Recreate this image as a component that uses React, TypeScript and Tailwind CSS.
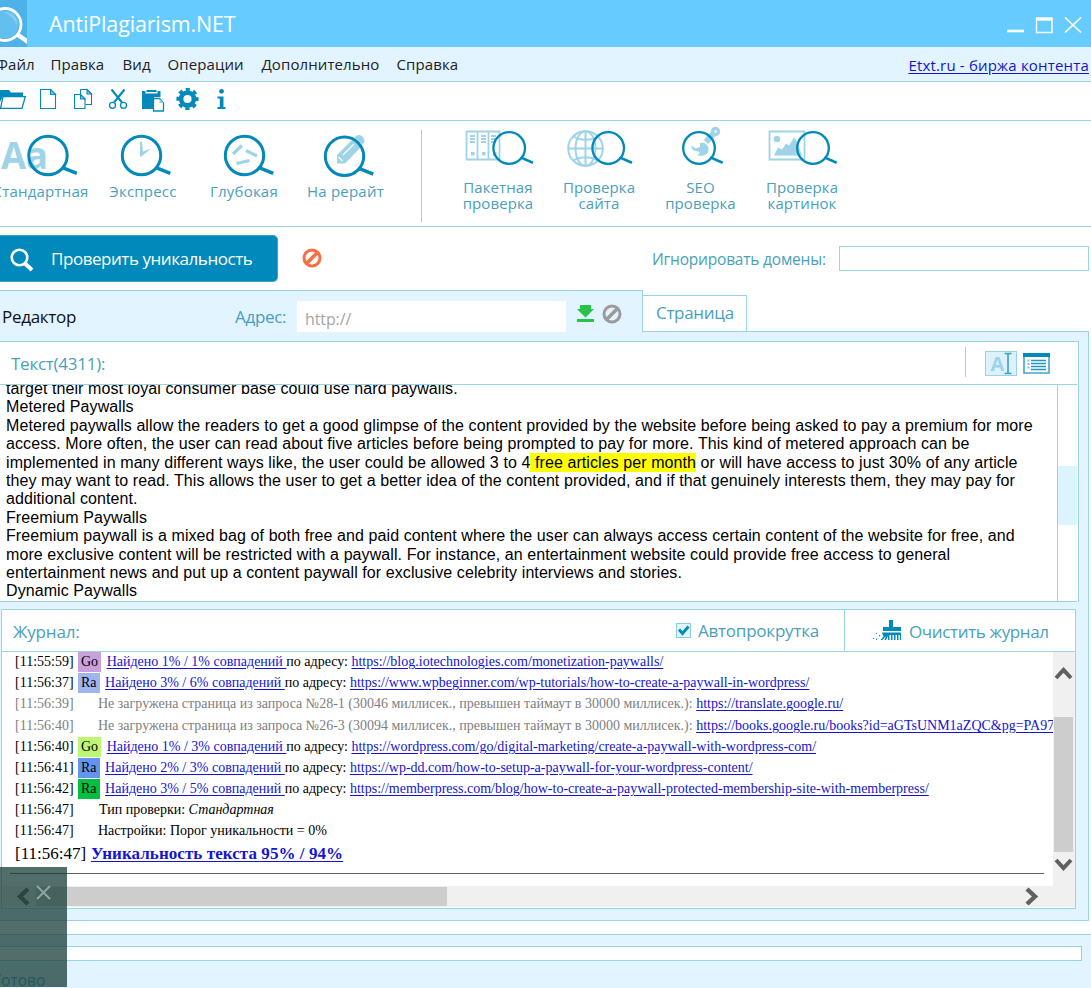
import { ReactNode } from "react";

type LogEntry = {
  time: string;
  engine: string;
  badge: string;
  found: string;
  url: string;
};

const menuItems = [
  { label: "Файл", className: "w-[54.5px] -ml-[4px]" },
  { label: "Правка", className: "w-[72px]" },
  { label: "Вид", className: "w-[45px]" },
  { label: "Операции", className: "w-[94px]" },
  { label: "Дополнительно", className: "w-[135px]" },
  { label: "Справка", className: "w-[70px]" }
];

const articleLines: ReactNode[] = [
  "target their most loyal consumer base could use hard paywalls.",
  "Metered Paywalls",
  "Metered paywalls allow the readers to get a good glimpse of the content provided by the website before being asked to pay a premium for more",
  "access. More often, the user can read about five articles before being prompted to pay for more. This kind of metered approach can be",
  <>
    implemented in many different ways like, the user could be allowed 3 to 4
    <span className="bg-[#ffff00] py-px"> free articles per month</span> or will have access to just 30% of any article
  </>,
  "they may want to read. This allows the user to get a better idea of the content provided, and if that genuinely interests them, they may pay for",
  "additional content.",
  "Freemium Paywalls",
  "Freemium paywall is a mixed bag of both free and paid content where the user can always access certain content of the website for free, and",
  "more exclusive content will be restricted with a paywall. For instance, an entertainment website could provide free access to general",
  "entertainment news and put up a content paywall for exclusive celebrity interviews and stories.",
  "Dynamic Paywalls"
];

const firstEntries: LogEntry[] = [
  { time: "[11:55:59]", engine: "Go", badge: "bg-[#c9a0dc]", found: "Найдено 1% / 1% совпадений ", url: "https://blog.iotechnologies.com/monetization-paywalls/" },
  { time: "[11:56:37]", engine: "Ra", badge: "bg-[#a0b4f0]", found: "Найдено 3% / 6% совпадений ", url: "https://www.wpbeginner.com/wp-tutorials/how-to-create-a-paywall-in-wordpress/" }
];

const lastEntries: LogEntry[] = [
  { time: "[11:56:40]", engine: "Go", badge: "bg-[#bef574]", found: "Найдено 1% / 3% совпадений ", url: "https://wordpress.com/go/digital-marketing/create-a-paywall-with-wordpress-com/" },
  { time: "[11:56:41]", engine: "Ra", badge: "bg-[#6495ed]", found: "Найдено 2% / 3% совпадений ", url: "https://wp-dd.com/how-to-setup-a-paywall-for-your-wordpress-content/" },
  { time: "[11:56:42]", engine: "Ra", badge: "bg-[#00c040]", found: "Найдено 3% / 5% совпадений ", url: "https://memberpress.com/blog/how-to-create-a-paywall-protected-membership-site-with-memberpress/" }
];

function FoundRow({ entry }: { entry: LogEntry }) {
  return (
    <div className="flex h-[21px] items-start">
      <span className="w-[63px] shrink-0 leading-5">{entry.time}</span>
      <span className={`h-5 shrink-0 px-[3px] leading-5 ${entry.badge}`}>{entry.engine}</span>
      <span className="ml-[5.5px] whitespace-pre leading-5">
        <a className="text-[#1414d2] underline underline-offset-2">{entry.found}</a>
        по адресу: <a className="text-[#1414d2] underline underline-offset-2">{entry.url}</a>
      </span>
    </div>
  );
}

function FailedRow({ time, text, url, className }: { time: string; text: string; url: string; className: string }) {
  return (
    <div className={`flex text-[#808080] ${className}`}>
      <span className="w-[83px] shrink-0 leading-5">{time}</span>
      <span className="whitespace-pre leading-5">
        {text} <a className="text-[#1414d2] underline underline-offset-2">{url}</a>
      </span>
    </div>
  );
}

function Lens({ cx, cy, r, w }: { cx: number; cy: number; r: number; w: number }) {
  const d = r * 0.72;
  return (
    <g stroke="#0089ba" fill="none">
      <circle cx={cx} cy={cy} r={r} strokeWidth={w} />
      <path d={`M${cx + d} ${cy + d - 2}L${cx + r * 1.5} ${cy + r * 0.93}`} strokeWidth={w + 0.4} />
    </g>
  );
}

function Forbidden({ color, className }: { color: string; className: string }) {
  return (
    <svg className={className} viewBox="0 0 20 20" fill="none" stroke={color} strokeWidth="3">
      <circle cx="10" cy="10" r="8" />
      <path d="M5 15L15 5" strokeWidth="3.6" />
    </svg>
  );
}

function ModeButton({ label, className, children }: { label: string; className: string; children: ReactNode }) {
  return (
    <div className={`flex shrink-0 flex-col items-center ${className}`}>
      {children}
      <span className="-mt-[2px] whitespace-nowrap text-[15px] leading-5 tracking-[0.2px]">{label}</span>
    </div>
  );
}

function TitleBar() {
  return (
    <header className="flex h-[47px] shrink-0 items-center bg-[#66ccff] text-white">
      <svg width="27" height="47" viewBox="0 0 27 47" fill="none">
        <rect width="27" height="47" fill="#4db1ea" />
        <circle cx="5" cy="24.500" r="14" fill="#63bff0" />
        <path d="M4 12a12 12 0 0 1 13 13c-3-7-7-10-13-13z" fill="#86d0f6" />
        <circle cx="5" cy="24.500" r="16" stroke="#fff" strokeWidth="2.800" />
        <path d="M18 35l10 7" stroke="#fff" strokeWidth="4.500" />
      </svg>
      <h1 className="ml-[22px] text-[21.5px] leading-7 tracking-[-0.15px]">AntiPlagiarism.NET</h1>
      <svg className="ml-auto" width="91" height="47" viewBox="1000 0 91 47" fill="none" stroke="#fff">
        <path d="M1007 31h17" strokeWidth="2.600" />
        <path d="M1036.500 18v14.500h15.500V18" strokeWidth="1.400" />
        <path d="M1036 19h16.600" strokeWidth="3.400" />
        <path d="M1065 17.500l16 15M1081 17.500l-16 15" strokeWidth="1.700" />
      </svg>
    </header>
  );
}

function Toolbar() {
  return (
    <div className="flex h-[39px] shrink-0 items-start border-b border-[#9bd3e6] pt-[5px]">
      <svg width="33" height="26" viewBox="0 87 33 26" fill="#0089ba">
        <path d="M0 90h9l2 2.500h12V96H3l-3 6z" />
        <path d="M3 96.700h22.300L22 108.400H0.500z" fill="#fff" stroke="#0089ba" strokeWidth="1.300" />
      </svg>
      <svg width="33" height="26" viewBox="33 87 33 26" fill="none" stroke="#0089ba" strokeWidth="1.100">
        <path d="M40.500 89.500h10l5 5v14h-15z" />
        <path d="M50.500 89.500v5h5z" fill="#8fd0e8" />
      </svg>
      <svg width="34" height="26" viewBox="66 87 34 26" fill="none" stroke="#0089ba" strokeWidth="1.100">
        <path d="M80.500 89.500h6.500l4.500 4.500v10.500h-6" />
        <path d="M87 89.500v4.500h4.500z" fill="#8fd0e8" />
        <path d="M80.500 89.500v4.500M74.500 94.500h6l4.500 4.500v9.500H74.500z" />
        <path d="M80.500 94.500v4.500H85z" fill="#8fd0e8" />
      </svg>
      <svg width="34" height="26" viewBox="100 87 34 26" fill="none" stroke="#0089ba">
        <path d="M111.500 89.500l10.500 13M124.500 89.500L114 102.500" strokeWidth="2" />
        <circle cx="112.500" cy="105.300" r="3" strokeWidth="1.300" />
        <circle cx="123.500" cy="105.300" r="3" strokeWidth="1.300" />
      </svg>
      <svg width="36" height="26" viewBox="134 87 36 26" fill="#0089ba">
        <path d="M142 91h3.500v2.500h12V91h3v6h-6.500v12H142z" />
        <path d="M146.500 90h10v2h-10z" />
        <path d="M153.500 98.500h6l4 4.500v8h-10z" fill="#fff" stroke="#0089ba" strokeWidth="1.300" />
        <path d="M159.500 98.500v4.500h4z" fill="#8fd0e8" />
      </svg>
      <svg width="37" height="26" viewBox="170 87 37 26" fill="none" stroke="#0089ba">
        <circle cx="187.500" cy="99" r="6.400" strokeWidth="4.600" />
        <circle cx="187.500" cy="99" r="9.700" strokeWidth="2.800" strokeDasharray="4.200 3.418" strokeDashoffset="2.100" />
      </svg>
      <svg width="30" height="26" viewBox="207 87 30 26" fill="#0089ba">
        <circle cx="221.500" cy="91.300" r="2.400" />
        <path d="M217.500 96.500h6v10.500h2v2h-8v-2h2.300v-8.500h-2.300z" />
      </svg>
    </div>
  );
}

function Modes() {
  return (
    <div className="flex h-[106px] shrink-0 items-start border-b border-[#9bd3e6] text-[#4a9fba]">
      <ModeButton label="Стандартная" className="-ml-[11px] w-[103px] pt-[9px]">
        <svg className="ml-[11px]" width="92" height="53" viewBox="0 130 92 53">
          <text x="1" y="169" fill="#9fd4e8" fontFamily="Open Sans, sans-serif" fontWeight="700" fontSize="38" textLength="47" lengthAdjust="spacingAndGlyphs">Aa</text>
          <Lens cx={48} cy={155.500} r={19.200} w={3} />
        </svg>
      </ModeButton>
      <ModeButton label="Экспресс" className="w-[102px] pt-[9px]">
        <svg width="102" height="53" viewBox="92 130 102 53">
          <path d="M140 141.500h2l1 10 8-3-9.500 8h-1.500z" fill="#9fd4e8" />
          <Lens cx={141.500} cy={155.500} r={19.200} w={3} />
        </svg>
      </ModeButton>
      <ModeButton label="Глубокая" className="w-[100px] pt-[9px]">
        <svg width="100" height="53" viewBox="194 130 100 53">
          <path d="M233 154l9-8.500M246 150.500l11 5.500M236.500 163.500l13-3" stroke="#9fd4e8" strokeWidth="3.300" />
          <Lens cx={244.500} cy={155.500} r={19.200} w={3} />
        </svg>
      </ModeButton>
      <ModeButton label="На рерайт" className="w-[103px] pt-[9px]">
        <svg width="103" height="53" viewBox="294 130 103 53">
          <path d="M337 163.500v-8.500l16-16 8 8-16 16.500z" fill="#9fd4e8" />
          <path d="M354.500 137.500c2-3.500 6-3 8-1s3 5.500 0 8z" fill="#9fd4e8" />
          <path d="M338.500 157l4 4M343 155l11-11" stroke="#fff" strokeWidth="1.200" />
          <Lens cx={344.500} cy={156.300} r={19.200} w={3} />
        </svg>
      </ModeButton>
      <div className="ml-6 mt-[9px] h-[92px] w-px bg-[#9bd3e6]" />
      <div className="ml-[26px] flex text-center text-[15px] leading-4 tracking-[0.1px]">
        <div className="w-[101px]">
          <svg width="101" height="58" viewBox="448 121 101 58">
            <path d="M466.500 131.500h33v28h-33zM477.500 131v29M488.500 131v29" stroke="#9fd4e8" strokeWidth="1.800" fill="none" />
            <path d="M470 136h5M470 139h5M470 142h5M481 136h5M481 139h5M481 142h5M491 136h5M491 139h5M491 142h5" stroke="#9fd4e8" strokeWidth="1.800" />
            <path d="M471 152h3.500v3.500H471zM482 152h3.500v3.500H482zM493 152h3.500v3.500H493z" fill="#9fd4e8" />
            <Lens cx={509.200} cy={148} r={15.800} w={2.300} />
          </svg>
          <p className="-ml-px">Пакетная<br />проверка</p>
        </div>
        <div className="w-[101px]">
          <svg width="101" height="58" viewBox="549 121 101 58">
            <g stroke="#9fd4e8" strokeWidth="2" fill="none">
              <circle cx="585.500" cy="148.500" r="17.300" />
              <ellipse cx="585.500" cy="148.500" rx="10" ry="17.300" />
              <path d="M585.500 131v35M568 148.500h35M573 136c6 5 19 5 25 0M573 161c6-5 19-5 25 0" />
            </g>
            <Lens cx={608.200} cy={148} r={15.800} w={2.300} />
          </svg>
          <p className="-ml-px">Проверка<br />сайта</p>
        </div>
        <div className="w-[102px]">
          <svg width="102" height="58" viewBox="650 121 102 58">
            <path d="M691.500 145.500l4 3 4.500-1.500v-4c5-1.500 9 2.500 8.500 7-0.500 4.500-5 6.500-11.500 5.500 3-1.500 3.500-4 0-4.300-3.500 0-6-2.500-5.500-5.700z" fill="#9fd4e8" />
            <path d="M706 142l8-9" stroke="#9fd4e8" strokeWidth="6" />
            <circle cx="715.500" cy="131.500" r="3" stroke="#9fd4e8" strokeWidth="3.400" fill="#fff" />
            <Lens cx={699} cy={148} r={15.800} w={2.300} />
          </svg>
          <p className="-ml-px">SEO<br />проверка</p>
        </div>
        <div className="w-[101px]">
          <svg width="101" height="58" viewBox="752 121 101 58">
            <path d="M769.500 131.500h35v28h-35z" stroke="#9fd4e8" strokeWidth="1.800" fill="none" />
            <circle cx="777" cy="139" r="3.200" fill="#9fd4e8" />
            <path d="M774 155.500l4-8 4 2 4-6 3 2 5-8 3 4 5 14z" fill="#9fd4e8" />
            <Lens cx={813} cy={148} r={15.800} w={2.300} />
          </svg>
          <p className="-ml-px">Проверка<br />картинок</p>
        </div>
      </div>
    </div>
  );
}

function CheckBar() {
  return (
    <div className="flex h-[63px] shrink-0 items-start">
      <button className="mt-2 flex h-[47px] w-[278px] items-center rounded-r-[5px] border border-l-0 border-[#3aa5cb] bg-[#0089ba] text-white" type="button">
        <svg className="ml-[8px] mt-[3px]" width="26" height="26" viewBox="8 247 26 26" fill="none" stroke="#fff">
          <circle cx="19.500" cy="257.500" r="7.800" strokeWidth="2.600" />
          <path d="M25 263.500l7 6.500" strokeWidth="4" />
        </svg>
        <span className="ml-[17px] whitespace-nowrap text-[17px] tracking-[-0.45px]">Проверить уникальность</span>
      </button>
      <Forbidden color="#fb6d42" className="ml-6 mt-[21px] h-5 w-5" />
      <span className="ml-[330px] mt-[22px] w-[187px] whitespace-nowrap text-[15.5px] leading-5 tracking-[-0.2px] text-[#4a9fba]">Игнорировать домены:</span>
      <div className="mt-[19px] h-[25px] w-[250px] border border-[#9bd3e6]" />
    </div>
  );
}

function Tabs() {
  return (
    <div className="flex h-[42px] shrink-0 items-start tracking-[-0.3px]">
      <div className="flex h-[42px] w-[643px] items-center border-t border-r border-[#9bd3e6] bg-[#e2f4ff] text-[17px]">
        <span className="w-[234px] pl-[2px] pt-[11px] leading-6 text-[#111]">Редактор</span>
        <span className="w-[63px] pl-px pt-[11px] leading-6 text-[#4a9fba]">Адрес:</span>
        <div className="mt-[10px] h-[31px] w-[269px] bg-white pl-2 pt-[6px] text-[16px] leading-6 tracking-[-0.1px] text-[#a5a5a5]">http://</div>
        <svg className="ml-2 mt-[5px]" width="24" height="24" viewBox="574 302 24 24" fill="#2bc24b">
          <path d="M580 305h11v4h3l-8.500 8.500L577 309h3zM577 319h17v3h-17z" />
        </svg>
        <Forbidden color="#9b9b9b" className="ml-[4px] mt-[5px] h-5 w-5" />
      </div>
      <div className="-ml-px mt-[5px] h-[37px] w-[105px] border border-[#9bd3e6] bg-white pl-[13px] pt-[5px] text-[17px] leading-6 text-[#4a9fba]">
        Страница
      </div>
      <div className="h-[42px] w-[342px] border-b border-[#9bd3e6]" />
    </div>
  );
}

function TextPanel() {
  return (
    <section className="h-[261px] w-[1079px] shrink-0 border-t border-r border-[#9bd3e6] bg-white">
      <div className="flex h-[43px] w-[1077px] items-start border-b border-[#9bd3e6]">
        <h2 className="w-[965px] pl-[11px] pt-[10px] text-[17px] leading-6 tracking-[-0.25px] text-[#4a9fba]">Текст(4311):</h2>
        <div className="mt-[5px] h-[30px] w-px bg-[#9bd3e6]" />
        <svg className="ml-[19px] mt-[9px]" width="32" height="25" viewBox="985 351 32 25">
          <rect x="985.500" y="351.500" width="31" height="24" fill="#dcf1fb" stroke="#9bd3e6" />
          <text x="990.500" y="371" fill="#9fd4e8" fontFamily="Open Sans, sans-serif" fontWeight="700" fontSize="20">A</text>
          <path d="M1004.500 353.500h2.500l1 1 1-1h2.500M1004.500 373.500h2.500l1-1 1 1h2.500M1008 354v19" stroke="#3c9fc6" strokeWidth="1.600" fill="none" />
        </svg>
        <svg className="ml-[6px] mt-[11px]" width="27" height="21" viewBox="1023 353 27 21">
          <path d="M1024 354h25v19h-25z" fill="#fff" stroke="#3fa5cb" strokeWidth="1.600" />
          <path d="M1023 353h27v4h-27z" fill="#0089ba" />
          <path d="M1031 360.500h15M1031 363.500h15M1031 366.500h15M1031 369.500h15" stroke="#2196c2" strokeWidth="1.500" />
          <path d="M1027.500 359.500h2v2h-2zM1027.500 363h2v2h-2zM1027.500 366.500h2v2h-2z" fill="#7cc6e2" />
        </svg>
      </div>
      <div className="flex h-[217px] w-[1077px] border-b border-[#9bd3e6]">
        <div className="-mt-[5px] w-[1057px] overflow-hidden pl-[6px] font-['Liberation_Sans',Arial,sans-serif] text-[16px] leading-[18.4px] tracking-[0.085px] text-black [clip-path:inset(5px_0_0_0)]">
          {articleLines.map((line, index) => (
            <p key={index} className="whitespace-pre">{line}</p>
          ))}
        </div>
        <div className="w-5 border-l border-[#9bd3e6] pt-[81px]">
          <div className="h-[59px] bg-[#dcf4fd]" />
        </div>
      </div>
    </section>
  );
}

function Journal() {
  return (
    <section className="ml-px mt-[7px] h-[300px] w-[1075px] shrink-0 border border-[#9bd3e6] bg-white">
      <div className="flex h-[42px] items-start border-b border-[#9bd3e6] text-[17px] leading-6 text-[#4a9fba]">
        <h2 className="w-[674px] pl-[11px] pt-[10px] tracking-[-0.15px]">Журнал:</h2>
        <svg className="mt-[13px]" width="15" height="15" viewBox="0 0 15 15">
          <rect x="0.500" y="0.500" width="14" height="14" fill="#e2f4ff" stroke="#8fcbe2" />
          <path d="M3 6.500l3.500 4 6-7" stroke="#0089ba" strokeWidth="2.800" fill="none" />
        </svg>
        <span className="w-[153px] pl-[7px] pt-[9px] tracking-[-0.22px]">Автопрокрутка</span>
        <div className="h-[41px] w-px bg-[#9bd3e6]" />
        <svg className="ml-7 mt-[10px]" width="29" height="21" viewBox="873 620 29 21" fill="#0089ba">
          <path d="M889 620h4v7h8v4h-18v-4h6zM882 632.500h19v7.500h-1v-5h-1.500v5h-1.500v-5h-1.500v5h-1.500v-5h-1.500v5h-1.500v-5h-1.500v5h-1.500v-4l-2 4h-1.500l1.500-4-3.500 4h-2l3-3.500z" />
          <path d="M876 633h1v1h-1zM879 635h1.200v1.200h-1.200zM873 638h1v1h-1zM876 638.500h1.200v1.200H876z" />
        </svg>
        <span className="ml-[7px] whitespace-nowrap pt-[10px] tracking-[-0.36px]">Очистить журнал</span>
      </div>
      <div className="flex h-[234px]">
        <div className="w-[1051px] overflow-hidden pl-[13px] font-['Liberation_Serif',serif] text-[14px] text-black">
          {firstEntries.map((entry) => (
            <FoundRow key={entry.url} entry={entry} />
          ))}
          <FailedRow className="h-[22px]" time="[11:56:39]" text="Не загружена страница из запроса №28-1 (30046 миллисек., превышен таймаут в 30000 миллисек.):" url="https://translate.google.ru/" />
          <FailedRow className="h-[21px]" time="[11:56:40]" text="Не загружена страница из запроса №26-3 (30094 миллисек., превышен таймаут в 30000 миллисек.):" url="https://books.google.ru/books?id=aGTsUNM1aZQC&pg=PA97" />
          {lastEntries.map((entry) => (
            <FoundRow key={entry.url} entry={entry} />
          ))}
          <div className="flex h-[21px] leading-5">
            <span className="w-[84px]">[11:56:47]</span>
            <span>Тип проверки: <i>Стандартная</i></span>
          </div>
          <div className="flex h-[21px] leading-5">
            <span className="w-[83px]">[11:56:47]</span>
            <span>Настройки: Порог уникальности = 0%</span>
          </div>
          <div className="flex h-[31px] text-[17px] leading-[23px]">
            <span className="w-[76px]">[11:56:47]</span>
            <a className="font-bold tracking-[0.07px] text-[#1414d2] underline underline-offset-2">Уникальность текста 95% / 94%</a>
          </div>
          <div className="-ml-[5px] mr-[9px] h-px bg-[#606060]" />
        </div>
        <div className="flex w-[22px] flex-col bg-[#f0f0f0]">
          <svg width="22" height="65" viewBox="1053 652 22 65" fill="none" stroke="#606060" strokeWidth="4">
            <path d="M1056 678l7.500-8 7.500 8" />
          </svg>
          <div className="ml-px h-[135px] w-[19px] bg-[#cdcdcd]" />
          <svg width="22" height="34" viewBox="1053 852 22 34" fill="none" stroke="#606060" strokeWidth="4">
            <path d="M1056 860l7.500 8 7.500-8" />
          </svg>
        </div>
      </div>
      <div className="flex h-[21px] items-center bg-[#f0f0f0]">
        <svg width="34" height="21" viewBox="2 886 34 21" fill="none" stroke="#606060" strokeWidth="4.400">
          <path d="M28 889l-8 7.500 8 7.500" />
        </svg>
        <div className="h-[19px] w-[411px] bg-[#cdcdcd]" />
        <svg className="ml-[573px]" width="30" height="21" viewBox="1020 886 30 21" fill="none" stroke="#606060" strokeWidth="4.400">
          <path d="M1027 889l8 7.500-8 7.500" />
        </svg>
      </div>
    </section>
  );
}

export default function App() {
  return (
    <div className="relative flex h-[988px] w-[1091px] flex-col overflow-hidden bg-white font-['Open_Sans','Noto_Sans',sans-serif]">
      <TitleBar />
      <nav className="flex h-[35px] shrink-0 items-start border-b border-[#9bd3e6] bg-[#e2f4ff] pt-[7px] text-[15px] leading-5 tracking-[0.1px] text-[#222]">
        {menuItems.map((item) => (
          <span key={item.label} className={`shrink-0 whitespace-nowrap ${item.className}`}>{item.label}</span>
        ))}
        <a className="ml-auto mr-[2px] whitespace-nowrap pt-px tracking-[0.18px] text-[#1414d2] underline underline-offset-2">Etxt.ru - биржа контента</a>
      </nav>
      <Toolbar />
      <Modes />
      <CheckBar />
      <Tabs />
      <main className="flex h-[589px] w-[1089px] shrink-0 flex-col border-r border-b border-[#9bd3e6] bg-[#e2f4ff] pt-[9px]">
        <TextPanel />
        <Journal />
      </main>
      <footer className="mt-[13px] h-[54px] shrink-0 border-t border-[#9bd3e6] bg-[#e2f4ff] pt-[11px] text-[#4a9fba]">
        <div className="h-[15px] w-[1082px] border border-l-0 border-[#9bd3e6] bg-white" />
        <p className="-ml-[7px] mt-[9px] text-[15.5px] leading-5">Готово</p>
      </footer>
      <div className="absolute top-[867px] left-0 h-[120px] w-[67px] bg-[rgba(24,61,57,0.75)]">
        <svg width="67" height="50" viewBox="0 867 67 50" stroke="#8fa8a6" strokeWidth="1.800">
          <path d="M37 886l13 13M50 886l-13 13" />
        </svg>
      </div>
    </div>
  );
}
